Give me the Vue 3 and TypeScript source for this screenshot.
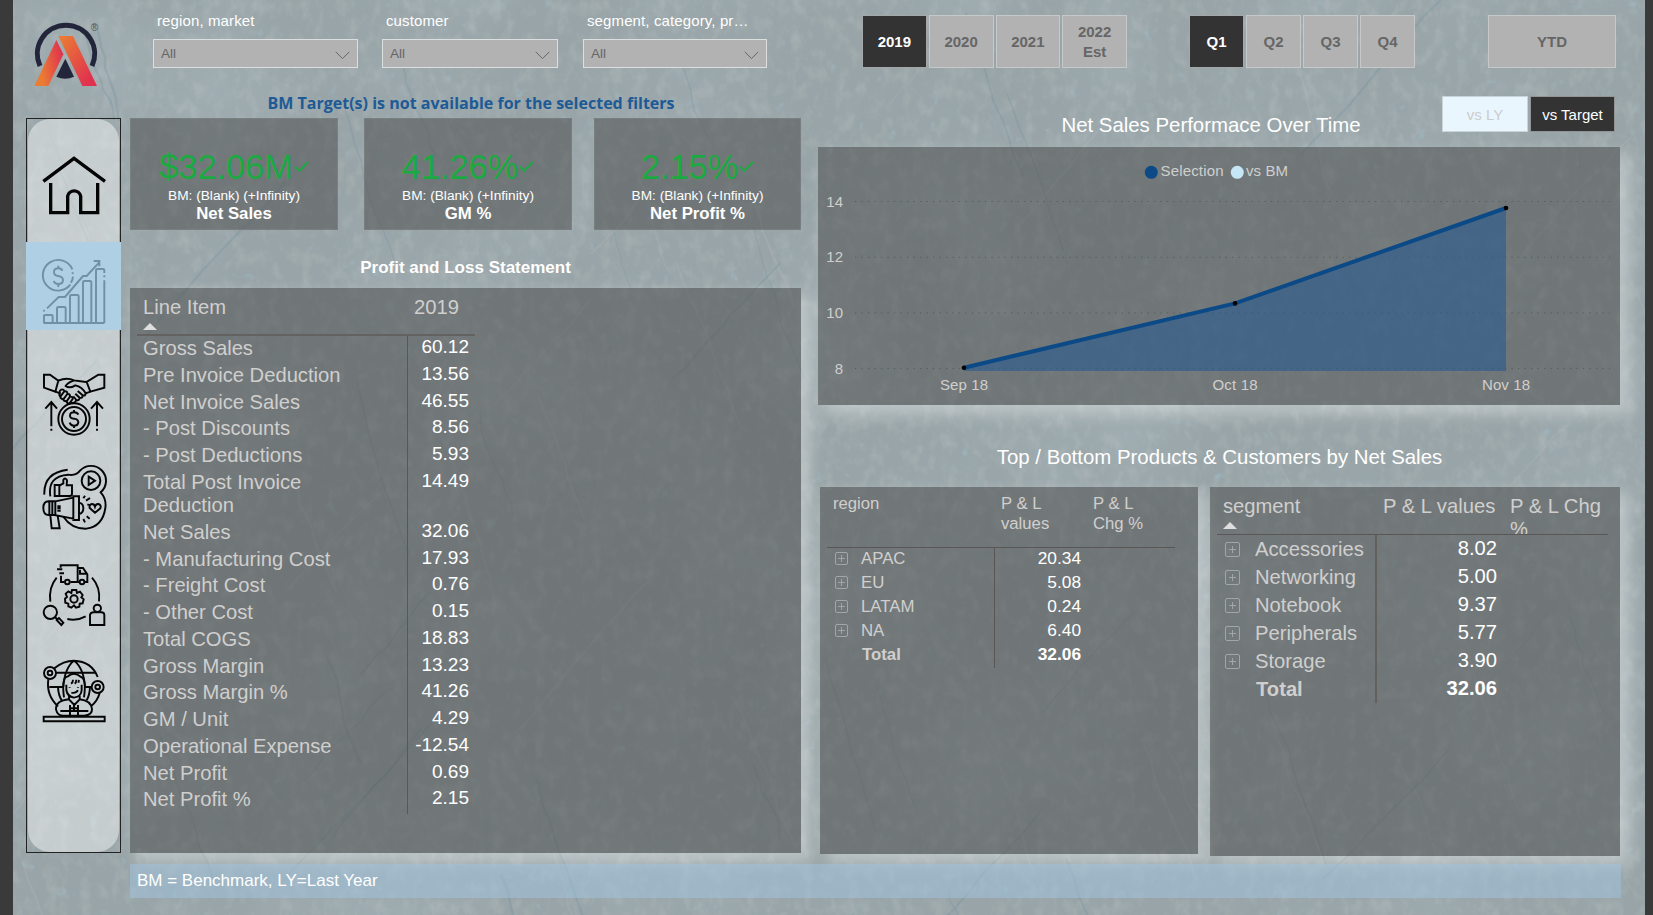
<script setup lang="ts">
interface LineItem { label: string; value: string; tall?: boolean }
interface Row { label: string; value: string; total?: boolean }

const slicers = [
  { label: 'region, market', cls: 'w1' },
  { label: 'customer', cls: 'w2' },
  { label: 'segment, category, pr…', cls: 'w3' },
]
const years = ['2019', '2020', '2021', '2022 Est']
const quarters = ['Q1', 'Q2', 'Q3', 'Q4']
const kpis = [
  { value: '$32.06M', name: 'Net Sales' },
  { value: '41.26%', name: 'GM %' },
  { value: '2.15%', name: 'Net Profit %' },
]
const lines: LineItem[] = [
  { label: 'Gross Sales', value: '60.12' },
  { label: 'Pre Invoice Deduction', value: '13.56' },
  { label: 'Net Invoice Sales', value: '46.55' },
  { label: '- Post Discounts', value: '8.56' },
  { label: '- Post Deductions', value: '5.93' },
  { label: 'Total Post Invoice Deduction', value: '14.49', tall: true },
  { label: 'Net Sales', value: '32.06' },
  { label: '- Manufacturing Cost', value: '17.93' },
  { label: '- Freight Cost', value: '0.76' },
  { label: '- Other Cost', value: '0.15' },
  { label: 'Total COGS', value: '18.83' },
  { label: 'Gross Margin', value: '13.23' },
  { label: 'Gross Margin %', value: '41.26' },
  { label: 'GM / Unit', value: '4.29' },
  { label: 'Operational Expense', value: '-12.54' },
  { label: 'Net Profit', value: '0.69' },
  { label: 'Net Profit %', value: '2.15' },
]
const regions: Row[] = [
  { label: 'APAC', value: '20.34' },
  { label: 'EU', value: '5.08' },
  { label: 'LATAM', value: '0.24' },
  { label: 'NA', value: '6.40' },
  { label: 'Total', value: '32.06', total: true },
]
const segments: Row[] = [
  { label: 'Accessories', value: '8.02' },
  { label: 'Networking', value: '5.00' },
  { label: 'Notebook', value: '9.37' },
  { label: 'Peripherals', value: '5.77' },
  { label: 'Storage', value: '3.90' },
  { label: 'Total', value: '32.06', total: true },
]
const ticks = [
  { v: 14, y: 54.5 },
  { v: 12, y: 110.3 },
  { v: 10, y: 165.9 },
  { v: 8, y: 221.6 },
]
const points = [
  { label: 'Sep 18', x: 146, y: 220.7, w: 48 },
  { label: 'Oct 18', x: 417, y: 156.4, w: 45 },
  { label: 'Nov 18', x: 688, y: 61, w: 48 },
]
const linePath = 'M' + points.map((p) => `${p.x} ${p.y}`).join(' L')
const areaPath = `${linePath} L688 224 L146 224 Z`

// Seeded generator so the backdrop scratches are stable between renders.
let seed = 41
function rnd(): number {
  seed = (seed * 16807) % 2147483647
  return seed / 2147483647
}
const scratches = Array.from({ length: 80 }, (_, i) => {
  let x = rnd() * 1632
  let y = rnd() * 915
  const slope = rnd() < 0.6 ? 0.35 : -0.9
  const step = 8 + rnd() * 12
  let d = `M${x.toFixed(0)} ${y.toFixed(0)}`
  for (let k = 0; k < 9; k++) {
    x += step * slope + (rnd() - 0.5) * 6
    y += step
    d += ` L${x.toFixed(0)} ${y.toFixed(0)}`
  }
  return { d, light: i % 2 === 0, w: 0.8 + rnd() * 1.6 }
})
</script>

<template>
  <div class="page">
    <svg class="backdrop" width="1632" height="915" viewBox="0 0 1632 915">
      <defs>
        <filter id="stain" x="0" y="0" width="100%" height="100%">
          <feTurbulence type="fractalNoise" baseFrequency="0.008 0.006" numOctaves="4" seed="8" />
          <feColorMatrix values="0 0 0 0 .52  0 0 0 0 .63  0 0 0 0 .69  1.4 0 0 0 -.5" />
        </filter>
        <filter id="frost" x="0" y="0" width="100%" height="100%">
          <feTurbulence type="fractalNoise" baseFrequency="0.09 0.06" numOctaves="4" seed="3" />
          <feColorMatrix values="0 0 0 0 .72  0 0 0 0 .73  0 0 0 0 .73  0 1.1 0 0 -.5" />
        </filter>
        <filter id="speck" x="0" y="0" width="100%" height="100%">
          <feTurbulence type="fractalNoise" baseFrequency="0.07" numOctaves="3" seed="19" />
          <feColorMatrix values="0 0 0 0 .35  0 0 0 0 .52  0 0 0 0 .6  4 0 0 0 -2.85" />
        </filter>
      </defs>
      <rect width="1632" height="915" filter="url(#stain)" opacity=".3" />
      <rect width="1632" height="915" filter="url(#frost)" opacity=".4" />
      <rect width="1632" height="915" filter="url(#speck)" opacity=".6" />
      <path
        v-for="(s, i) in scratches" :key="i" :d="s.d" fill="none" :stroke="s.light ? '#b4bbbd' : '#6c909e'"
        :stroke-width="s.w" stroke-opacity=".26"
      />
    </svg>

    <header class="topbar">
      <svg class="logo" width="68" height="68" viewBox="96 60 204 204">
        <defs>
          <linearGradient id="lg1" x1="0" y1="0.3" x2="1" y2="0">
            <stop offset=".1" stop-color="#ea7c34" /><stop offset=".9" stop-color="#e0314f" />
          </linearGradient>
          <linearGradient id="lg2" x1="0" y1="0" x2="1" y2="1">
            <stop offset=".05" stop-color="#ea7c34" /><stop offset=".85" stop-color="#e0314f" />
          </linearGradient>
        </defs>
        <path d="M120 198 A86 86 0 1 1 276 198" fill="none" stroke="#23263a" stroke-width="15" />
        <path d="M196 176 L222 230 Q196 242 169 230 Z" fill="#23263a" />
        <path d="M169 120 L190 163 L145 258 H103 Z" fill="url(#lg1)" />
        <path d="M175 108 H219 L291 258 H247 Z" fill="url(#lg2)" />
        <text x="283" y="94" class="reg">®</text>
      </svg>

      <div class="slicers">
        <div v-for="s in slicers" :key="s.label" class="slicer" :class="s.cls">
          <span class="slicer-label">{{ s.label }}</span>
          <div class="select">
            <span>All</span>
            <svg width="15" height="9" viewBox="0 0 15 9"><path d="M.7 .8 L7.5 7.6 L14.3 .8" fill="none" stroke="#666" stroke-width="1" /></svg>
          </div>
        </div>
      </div>

      <div class="tiles years">
        <button v-for="(y, i) in years" :key="y" class="tile" :class="{ on: i === 0 }">{{ y }}</button>
      </div>
      <div class="tiles quarters">
        <button v-for="(q, i) in quarters" :key="q" class="tile" :class="{ on: i === 0 }">{{ q }}</button>
      </div>
      <button class="tile ytd">YTD</button>
    </header>

    <main class="content">
      <nav class="rail">
        <div class="rail-inner">
          <a class="nav home">
            <svg width="68" height="68" viewBox="120 459 204 204">
              <path class="bold" d="M130 544 L222 475 L315 544 M152 549 V638 H203 V588 A20 20 0 0 1 242 588 V638 H293 V549" />
            </svg>
          </a>
          <a class="nav trend">
            <svg width="68" height="68" viewBox="120 84 204 204">
              <path d="M217 118 A46 46 0 1 0 211 164 M218 127 V132 M219 140 Q218 150 213 158" />
              <path d="M187 122 Q185 115 175 115 Q162 115 162 126 Q162 137 175 138 Q189 140 189 151 Q188 162 175 162 Q164 162 161 153 M175 107 V115 M175 162 V171" />
              <path d="M141 235 L176 201 H195 L249 138 H260 L297 98 M281 93 H298 V109 M130 244 L134 241" />
              <path d="M131 279 H313 M132 279 V257 Q132 255 135 255 H155 Q158 255 158 258 V279 M171 279 V235 Q171 231 175 231 H193 Q197 231 197 235 V279 M210 279 V199 Q210 195 214 195 H232 Q236 195 236 199 V279 M249 279 V157 Q249 153 253 153 H270 Q274 153 274 157 V279 M288 279 V121 Q288 117 292 117 H309 Q313 117 313 121 V129 M313 136 V142 M313 151 V279" />
            </svg>
          </a>
          <a class="nav deal">
            <svg width="68" height="68" viewBox="120 423 204 204">
              <path d="M132 434 H150 L175 452 L166 485 L132 473 Z M313 434 H295 L260 456 L271 485 L313 473 Z" />
              <path d="M175 452 Q200 441 222 451 L258 456 M222 451 Q202 458 197 468 Q208 477 226 466 Q246 470 257 490 L271 485 M167 485 L181 491" />
              <path d="M181 491 Q175 484 184 479 Q192 477 193 484 L181 500 Q175 493 181 491 M193 484 Q203 483 202 492 L190 508 Q181 506 181 500 M202 492 Q211 491 210 500 L200 514 Q190 514 190 508 M210 500 Q219 499 218 507 L208 521 Q200 521 200 514 M257 490 Q256 499 248 496 Q248 506 239 503 Q238 513 229 510 Q225 521 214 518 M233 483 L248 496 M226 491 L239 503 M220 499 L229 510" />
              <circle cx="222" cy="567" r="47" /><circle cx="222" cy="567" r="36" />
              <path d="M235 554 Q232 547 222 547 Q210 547 210 557 Q210 565 222 566 Q235 568 235 577 Q234 587 222 587 Q212 587 209 578 M222 540 V547 M222 587 V594" />
              <path d="M154 589 V518 M136 536 L154 516 L171 536 M291 589 V518 M273 536 L291 516 L309 536 M154 596 V602 M291 596 V602" />
            </svg>
          </a>
          <a class="nav promo">
            <svg width="68" height="68" viewBox="120 42 204 204">
              <path d="M133 134 Q130 68 203 59 M151 139 Q142 78 205 74 Q228 78 240 62 A45 45 0 1 1 302 127 Q320 147 316 174 Q308 229 259 236 Q215 237 190 200" />
              <circle cx="273" cy="92" r="28" /><path d="M266 80 L285 92 L266 105 Z" />
              <path d="M164 105 H178 V138 H164 Z M178 107 L190 100 V90 Q195 80 201 91 L200 106 H216 V131 Q216 138 209 138 H178" />
              <path d="M166 154 L220 143 V206 L163 195 M220 139 H237 V210 H220 Z M237 158 Q250 160 250 175 Q250 190 237 192 M166 154 V195 M157 155 V195 M148 155 V195 M166 154 H146 Q130 154 130 174 Q130 195 146 195 H166 M151 196 L155 235 H179 L173 197 M172 169 H182 M172 175 H182 M172 182 H182" />
              <path d="M285 188 L269 174 Q267 163 276 162 Q283 162 285 170 Q288 161 295 162 Q305 165 301 175 Z M250 145 L255 137 M258 152 L270 144 M262 163 L271 166 M250 207 L255 217 M260 199 L269 206" />
            </svg>
          </a>
          <a class="nav supply">
            <svg width="68" height="68" viewBox="120 333 204 204">
              <path d="M182 353 V346 H233 V396 H211 M193 396 H183 V377 M233 354 H249 L262 373 V396 H255 M238 396 H233 M240 359 V371 H260 M171 358 H187 M178 370 H192" />
              <circle cx="202" cy="396" r="7" /><circle cx="246" cy="396" r="7" />
              <path d="M170 383 Q145 413 151 455 M276 383 Q302 412 297 454 M202 507 Q230 514 257 499" />
              <circle cx="222" cy="447" r="11" />
              <path d="M216 420 H229 L231 429 L240 425 L248 435 L244 442 L251 448 L248 460 L239 461 L238 470 L228 473 L222 466 L214 473 L205 469 L205 461 L196 458 L195 446 L201 441 L197 431 L205 424 L214 429 Z" />
              <circle cx="151" cy="487" r="20" /><path d="M165 501 L172 508 M170 510 L177 504 L190 518 L184 525 Z" />
              <circle cx="292" cy="475" r="11" /><path d="M270 525 V494 Q272 487 281 487 H304 Q312 487 313 494 V525 Z" />
            </svg>
          </a>
          <a class="nav exec">
            <svg width="68" height="68" viewBox="120 621 204 204">
              <circle cx="150" cy="669" r="18" /><circle cx="150" cy="669" r="7" />
              <circle cx="293" cy="711" r="18" /><circle cx="293" cy="711" r="7" />
              <path d="M163 655 Q190 632 222 632 Q275 634 293 681 M145 688 Q138 735 174 769 M299 729 Q293 752 273 769 M168 668 H289 M148 711 H190 M255 711 H275 M222 632 Q194 653 190 711 M222 632 Q251 653 255 711 M174 711 Q175 735 185 751 M270 711 Q269 735 260 751" />
              <path d="M192 742 Q184 683 202 680 Q222 662 243 681 Q260 686 252 742 M199 704 V720 Q202 740 222 743 Q244 740 245 720 V704 M219 689 Q219 698 213 701 M229 689 Q229 698 224 701 M237 690 L235 698 M209 711 V713 M234 711 V713 M214 728 Q228 731 234 721 M207 738 L207 748 L223 765 L239 748 V738" />
              <path d="M207 748 Q167 752 168 778 Q172 797 190 797 H253 Q277 795 276 777 Q273 752 239 748 M181 783 H265 M210 765 V797 M234 765 V797 M210 775 H234 M222 765 V785" />
              <path d="M131 800 H314 V814 H131 Z" />
            </svg>
          </a>
        </div>
      </nav>

      <section class="left">
        <p class="notice">BM Target(s) is not available for the selected filters</p>
        <div class="kpis">
          <article v-for="k in kpis" :key="k.name" class="kpi">
            <div class="kpi-value">
              <span>{{ k.value }}</span>
              <svg width="15" height="12" viewBox="0 0 15 12"><path d="M.8 5.5 L5.3 10 L14 1" fill="none" stroke="#1aab40" stroke-width="1.8" /></svg>
            </div>
            <div class="kpi-goal">BM: (Blank) (+Infinity)</div>
            <div class="kpi-name">{{ k.name }}</div>
          </article>
        </div>
        <h2 class="pl-title">Profit and Loss Statement</h2>
        <div class="panel pl">
          <div class="pl-head">
            <div>Line Item<i class="sort" /></div>
            <div class="pl-year">2019</div>
          </div>
          <div v-for="l in lines" :key="l.label" class="pl-row" :class="{ tall: l.tall }">
            <div class="pl-label">{{ l.label }}</div>
            <div class="pl-value">{{ l.value }}</div>
          </div>
        </div>
      </section>

      <section class="right">
        <div class="chart-top">
          <h2>Net Sales Performace Over Time</h2>
          <div class="toggle">
            <button class="ly">vs LY</button>
            <button class="target">vs Target</button>
          </div>
        </div>
        <div class="panel chart">
          <svg width="802" height="258" viewBox="0 0 802 258">
            <circle cx="333.3" cy="25.3" r="6.5" fill="#0b4a86" />
            <text x="342.5" y="29" textLength="63">Selection</text>
            <circle cx="419.3" cy="25.3" r="6.5" fill="#c5e6f5" />
            <text x="428" y="29" textLength="42">vs BM</text>
            <g v-for="t in ticks" :key="t.v">
              <text x="25" :y="t.y + 5" text-anchor="end">{{ t.v }}</text>
              <line x1="37" x2="792" :y1="t.y" :y2="t.y" class="grid" />
            </g>
            <path :d="areaPath" fill="#2158928c" />
            <path :d="linePath" fill="none" stroke="#0b4a86" stroke-width="4" />
            <g v-for="p in points" :key="p.label">
              <circle :cx="p.x" :cy="p.y" r="2.3" fill="#000" />
              <text :x="p.x" y="243" text-anchor="middle" :textLength="p.w">{{ p.label }}</text>
            </g>
          </svg>
        </div>
        <h2 class="tb-title">Top / Bottom Products &amp; Customers by Net Sales</h2>
        <div class="tables">
          <div class="panel region">
            <div class="r-head">
              <div class="c1">region</div><div class="c2">P &amp; L<br>values</div><div class="c3">P &amp; L<br>Chg %</div>
            </div>
            <div v-for="r in regions" :key="r.label" class="r-row" :class="{ total: r.total }">
              <div class="r-label"><i v-if="!r.total" class="plus" /><span>{{ r.label }}</span></div>
              <div class="r-value">{{ r.value }}</div>
            </div>
          </div>
          <div class="panel segment">
            <div class="s-head">
              <div class="c1">segment<i class="sort" /></div><div class="c2">P &amp; L values</div><div class="c3">P &amp; L Chg<br>%</div>
            </div>
            <div v-for="r in segments" :key="r.label" class="s-row" :class="{ total: r.total }">
              <div class="s-label"><i v-if="!r.total" class="plus" /><span>{{ r.label }}</span></div>
              <div class="s-value">{{ r.value }}</div>
            </div>
          </div>
        </div>
      </section>
    </main>

    <footer class="foot">BM = Benchmark, LY=Last Year</footer>
  </div>
</template>

<style>
body {
  background: #3a3a3a;
  overflow: hidden;
}
</style>

<style scoped>
* { box-sizing: border-box; }
.page {
  position: relative;
  width: 1632px;
  height: 915px;
  margin-left: 13px;
  overflow: hidden;
  background: #98a4a7;
  color: #fff;
  font-family: "Liberation Sans", Arial, sans-serif;
}
.backdrop { position: absolute; top: 0; left: 0; }
.topbar, .content, .foot { position: relative; }
button { font-family: inherit; padding: 0; }
h2, p { margin: 0; font-weight: 400; }

.topbar { display: flex; align-items: flex-start; height: 88px; padding-top: 15px; }
.logo { margin: 5px 0 0 19px; flex: none; }
.reg { font: 30px "Liberation Sans", sans-serif; fill: #4a5057; text-anchor: middle; }
.slicers { display: flex; width: 762px; flex: none; padding-left: 53px; margin-top: -4px; }
.slicer-label { display: block; height: 28px; padding-left: 4px; font-size: 15px; line-height: 20px; letter-spacing: .12px; white-space: nowrap; }
.w1 { width: 205px; margin-right: 24px; }
.w2 { width: 176px; margin-right: 25px; }
.w3 { width: 184px; }
.select {
  display: flex; align-items: center; justify-content: space-between;
  height: 29px; padding: 0 7px; border: 1px solid #dcdfe0; background: #b2b2b2;
  color: #666; font-size: 13.6px;
}
.select svg { margin-top: 4px; }
.tiles { display: flex; gap: 2px; flex: none; }
.years { width: 265px; }
.quarters { width: 226px; margin-left: 62px; }
.years .tile, .quarters .tile { flex: 1; }
.tile {
  height: 53px; border: 1px solid #c6c9ca; background: #b2b2b2; color: #666;
  font-size: 15px; font-weight: 700; line-height: 20px;
}
.years .tile { padding: 0 10px; }
.tile.on { background: #333; color: #fff; border-color: #a5a8a9; }
.ytd { width: 128px; margin-left: 73px; flex: none; }

.content { display: flex; height: 766px; }
.rail { width: 95px; height: 735px; margin: 30px 0 0 13px; border: 1px solid #222; flex: none; }
.rail-inner { height: 733px; margin: 0 1px; border-radius: 22px; background: rgba(255, 255, 255, .44); }
.nav { display: flex; justify-content: center; align-items: flex-start; }
.nav svg { fill: none; stroke: #050505; stroke-width: 5.8; }
.nav .bold { stroke-width: 10; }
.home { height: 123px; padding-top: 34px; }
.trend { height: 88px; margin: 0 -2px; padding-top: 16px; background: #afcfe4; }
.nav.trend svg { stroke: #7090a5; }
.deal { height: 109px; padding-top: 41px; }
.promo { height: 93px; padding-top: 25px; }
.supply { height: 97px; padding-top: 29px; }
.exec { height: 96px; padding-top: 28px; }

.left { width: 671px; margin-left: 9px; flex: none; }
.notice { height: 30px; padding-left: 11px; text-align: center; font: 700 16.05px/30px "Open Sans", "Noto Sans", sans-serif; color: #1d5a96; }
.kpis { display: flex; height: 112px; }
.kpi { width: 208px; background: rgba(75, 75, 75, .52); border: 1px solid rgba(130, 136, 138, .5); text-align: center; padding-top: 28px; }
.kpi:nth-child(2) { margin: 0 22px 0 26px; }
.kpi:nth-child(3) { width: 207px; }
.kpi-value { display: flex; justify-content: center; align-items: center; height: 40px; color: #1aab40; font-size: 34.3px; line-height: 40px; }
.kpi-value svg { margin-left: 1px; }
.kpi-goal { font-size: 13.7px; line-height: 16px; margin-top: 1px; }
.kpi-name { font-size: 16.8px; font-weight: 700; line-height: 18px; margin-top: 1px; }
.pl-title { height: 58px; padding-top: 27px; text-align: center; font-size: 17px; line-height: 22px; font-weight: 700; }

.panel { background: rgba(75, 75, 75, .52); box-shadow: 8px 8px 14px 2px rgba(255, 255, 255, .32); }
.pl { height: 565px; padding: 0 0 0 7px; font-size: 20.2px; color: #d0cfce; }
.pl-head { display: flex; width: 338px; height: 48px; padding: 7px 16px 0 6px; line-height: 24px; justify-content: space-between; border-bottom: 2px solid #636261; }
.sort { display: block; width: 0; border: 7px solid transparent; border-top: 0; border-bottom-color: #dedede; margin-top: 4px; }
.pl-row { display: flex; width: 338px; height: 26.75px; }
.pl-row.tall { height: 50.2px; }
.pl-label { width: 271px; padding: 1px 50px 0 6px; border-right: 1px solid #5c5657; line-height: 23.6px; white-space: nowrap; }
.tall .pl-label { white-space: normal; }
.pl-value { flex: 1; padding-right: 6px; text-align: right; color: #fff; font-size: 19px; line-height: 21.5px; }

.right { width: 803px; margin-left: 17px; flex: none; }
.chart-top { display: flex; height: 59px; }
.chart-top h2 { width: 624px; padding: 25px 0 0 162px; text-align: center; font-size: 20.4px; line-height: 24px; white-space: nowrap; }
.toggle { display: flex; gap: 2px; padding-top: 8px; }
.toggle button { height: 36px; width: 86px; border: 1px solid #c9d3d8; font-size: 15px; }
.toggle .ly { background: #eaf6fe; color: #ccc; }
.toggle .target { background: #333; color: #fff; border-color: #929596; }
.toggle .target { width: 85px; }
.chart { width: 802px; height: 258px; }
.chart svg { display: block; }
.chart text { font-size: 15px; fill: #d0cfce; }
.grid { stroke: #555a5c; stroke-width: 1; stroke-dasharray: 1.2 5.3; }
.tb-title { height: 82px; padding-top: 40px; font-size: 20.4px; line-height: 24px; text-align: center; }
.tables { display: flex; gap: 12px; padding-left: 2px; }

.region { width: 378px; height: 367px; padding-left: 7px; font-size: 16.8px; color: #d0cfce; }
.r-head { display: flex; width: 348px; height: 61px; padding: 7px 0 0 6px; border-bottom: 1px solid #5a5655; line-height: 20px; font-size: 16.7px; }
.r-head .c1 { width: 168px; }
.r-head .c2 { width: 92px; }
.r-row { display: flex; height: 24px; }
.r-label { display: flex; align-items: center; width: 168px; padding: 0 0 3px 8px; border-right: 1px solid #5a5655; line-height: 21px; }
.plus {
  width: 13px; height: 13px; border: 1px solid #a3a6a7; border-radius: 2px; flex: none;
  background: linear-gradient(#a3a6a7, #a3a6a7) center / 7px 1px no-repeat, linear-gradient(#a3a6a7, #a3a6a7) center / 1px 7px no-repeat;
}
.r-label span { margin-left: 13px; }
.r-row .r-value { width: 86px; text-align: right; color: #fff; font-size: 17.3px; line-height: 21px; }
.total { font-weight: 700; }
.r-row.total .r-label span { margin-left: 27px; }

.segment { width: 410px; height: 369px; padding-left: 7px; font-size: 20.2px; color: #d0cfce; }
.s-head { display: flex; width: 391px; height: 48px; padding: 8px 0 0 6px; border-bottom: 1px solid #5a5655; line-height: 23px; overflow: hidden; }
.s-head .c1 { width: 160px; }
.s-head .c2 { width: 127px; }
.s-row { display: flex; height: 28px; }
.s-label { display: flex; align-items: center; width: 160px; padding-left: 8px; border-right: 2px solid #625f5f; line-height: 25px; }
.s-label .plus { width: 15px; height: 15px; }
.s-label span { margin-left: 15px; }
.s-row.total .s-label span { margin-left: 31px; }
.s-value { width: 120px; text-align: right; color: #fff; line-height: 27px; }

.foot { width: 1491px; height: 34px; margin: 10px 0 0 117px; padding-left: 7px; background: rgba(160, 196, 224, .5); font-size: 17px; line-height: 33px; }
</style>
